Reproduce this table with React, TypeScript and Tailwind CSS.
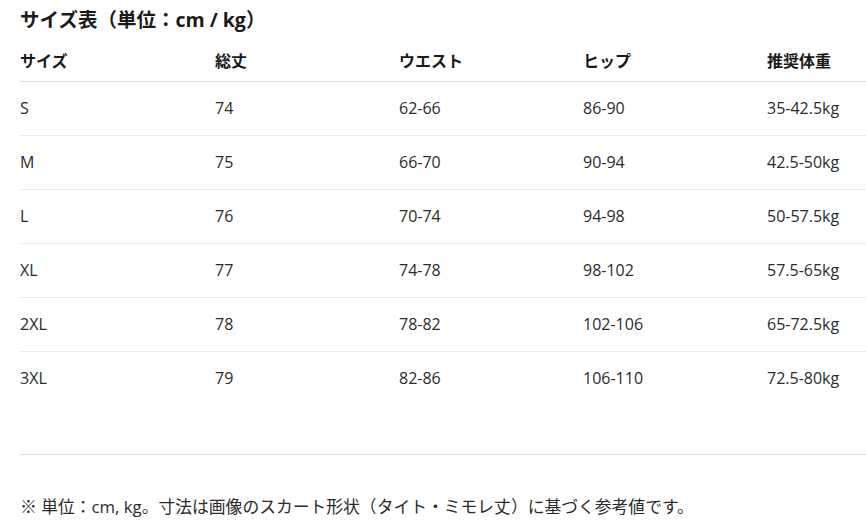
const font = "font-['Open_Sans','Noto_Sans_CJK_JP',sans-serif]";

const headers = ['サイズ', '総丈', 'ウエスト', 'ヒップ', '推奨体重'];

const rows = [
  ['S', '74', '62-66', '86-90', '35-42.5kg'],
  ['M', '75', '66-70', '90-94', '42.5-50kg'],
  ['L', '76', '70-74', '94-98', '50-57.5kg'],
  ['XL', '77', '74-78', '98-102', '57.5-65kg'],
  ['2XL', '78', '78-82', '102-106', '65-72.5kg'],
  ['3XL', '79', '82-86', '106-110', '72.5-80kg'],
];

export default function App() {
  return (
    <div className={`${font} w-[866px] h-[527px] overflow-hidden bg-white pl-5 pt-1.5 text-[#222]`}>
      <h2 className="h-7 text-[19.5px] leading-7 font-bold text-[#1a1a1a]">サイズ表（単位：cm / kg）</h2>

      <table className="mt-[7px] w-[931px] table-fixed border-collapse text-left">
        <thead>
          <tr className="h-10 border-b border-[#dcdcdc]">
            {headers.map((h, i) => (
              <th
                key={h}
                className={`${i === 0 ? 'w-[195px]' : 'w-[184px]'} p-0 text-[16px] font-bold text-[#1a1a1a]`}
              >
                {h}
              </th>
            ))}
          </tr>
        </thead>
        <tbody>
          {rows.map((row, i) => (
            <tr
              key={row[0]}
              className={`h-[54px] ${i < rows.length - 1 ? 'border-b border-[#ececec]' : ''}`}
            >
              {row.map((cell, j) => (
                <td key={j} className="p-0 text-[16px] text-[#2b2b2b]">
                  {cell}
                </td>
              ))}
            </tr>
          ))}
        </tbody>
      </table>

      <div className="mt-[49px] border-t border-[#dcdcdc] pt-[40px]">
        <p className="text-[16.8px] leading-6 text-[#2b2b2b]">
          ※ 単位：cm, kg。寸法は画像のスカート形状（タイト・ミモレ丈）に基づく参考値です。
        </p>
      </div>
    </div>
  );
}
